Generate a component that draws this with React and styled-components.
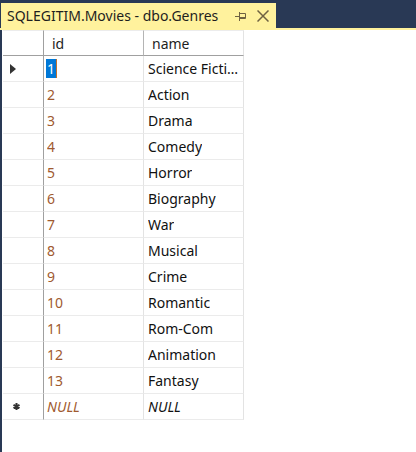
import React from 'react';
import styled, { createGlobalStyle } from 'styled-components';

const Global = createGlobalStyle`
  html, body { margin: 0; padding: 0; }
  body { background: #293955; font-family: "Noto Sans", "Open Sans", sans-serif; }
`;

const Window = styled.div`
  width: 416px;
  height: 452px;
  background: #293955;
  display: flex;
  flex-direction: column;
  overflow: hidden;
`;

const TabBar = styled.div`
  height: 25px;
  padding-top: 3px;
  padding-left: 1px;
  display: flex;
`;

const Tab = styled.div`
  width: 275px;
  background: #fff29d;
  display: flex;
  align-items: center;
  padding-left: 6px;
  padding-right: 7px;
  box-sizing: border-box;
`;

const Title = styled.span`
  flex: 1;
  font-size: 14px;
  color: #1e1e1e;
  white-space: nowrap;
`;

const TabIcons = styled.div`
  display: flex;
  align-items: center;
  gap: 10px;
`;

const Strip = styled.div`
  height: 2px;
  background: #fff29d;
`;

const Body = styled.div`
  flex: 1;
  margin-left: 2px;
  background: #fff;
  padding-left: 1px;
`;

const Row = styled.div`
  display: grid;
  grid-template-columns: 41px 100px 100px;
  height: 26px;
`;

const HeaderCell = styled.div`
  box-sizing: border-box;
  border-right: 1px solid ${p => (p.$last ? '#e3e3e3' : '#b4b4b4')};
  border-bottom: 1px solid #a0a0a0;
  border-top: 1px solid #ececec;
  display: flex;
  align-items: center;
  padding-left: 8px;
  font-size: 14px;
  color: #1e1e1e;
`;

const RowHead = styled.div`
  box-sizing: border-box;
  border-right: 1px solid #a0a0a0;
  border-bottom: 1px solid ${p => (p.$header ? '#a0a0a0' : '#ebebeb')};
  border-top: ${p => (p.$header ? '1px solid #ececec' : '0')};
  display: flex;
  align-items: center;
  padding-left: ${p => p.$pad || 0}px;
`;

const Cell = styled.div`
  box-sizing: border-box;
  border-right: 1px solid #e3e3e3;
  border-bottom: 1px solid #ebebeb;
  display: flex;
  align-items: center;
  padding-left: ${p => p.$pad}px;
  padding-right: 3px;
  font-size: 14px;
  color: ${p => (p.$num ? '#a05a30' : '#111')};
  font-style: ${p => (p.$null ? 'italic' : 'normal')};
  white-space: nowrap;
  overflow: hidden;
  min-width: 0;
`;

const CellText = styled.span`
  overflow: hidden;
  text-overflow: ellipsis;
  white-space: nowrap;
`;

const Selected = styled.span`
  background: #0078d7;
  color: #fff;
  line-height: 19px;
  padding: 0 1px;
  border-right: 1px solid #c0702e;
`;

const PinIcon = () => (
  <svg width="12" height="10" viewBox="0 0 12 10" fill="none" stroke="#6f6242" strokeWidth="1">
    <path d="M0 5.5 H4" />
    <path d="M4.5 1 V10" />
    <path d="M4.5 2.5 H10.5 V7.5 H4.5" />
    <path d="M4.5 6.5 H10.5" />
  </svg>
);

const CloseIcon = () => (
  <svg width="12" height="12" viewBox="0 0 12 12" fill="none" stroke="#6f6242" strokeWidth="1.5">
    <path d="M0.5 0.5 L11.5 11.5 M11.5 0.5 L0.5 11.5" />
  </svg>
);

const Arrow = () => (
  <svg width="7" height="10" viewBox="0 0 7 10">
    <path d="M0 0 L6 5 L0 10 Z" fill="#333" />
  </svg>
);

const Star = () => (
  <svg width="7" height="7" viewBox="0 0 7 7" stroke="#333" strokeWidth="2">
    <path d="M3.5 0 V7 M0.5 1.8 L6.5 5.2 M6.5 1.8 L0.5 5.2" />
  </svg>
);

const genres = [
  'Science Fiction', 'Action', 'Drama', 'Comedy', 'Horror', 'Biography', 'War',
  'Musical', 'Crime', 'Romantic', 'Rom-Com', 'Animation', 'Fantasy',
];

export default function App() {
  return (
    <Window>
      <Global />
      <TabBar>
        <Tab>
          <Title>SQLEGITIM.Movies - dbo.Genres</Title>
          <TabIcons>
            <PinIcon />
            <CloseIcon />
          </TabIcons>
        </Tab>
      </TabBar>
      <Strip />
      <Body>
        <Row>
          <RowHead $header />
          <HeaderCell>id</HeaderCell>
          <HeaderCell $last>name</HeaderCell>
        </Row>
        {genres.map((g, i) => (
          <Row key={g}>
            <RowHead $pad={7}>{i === 0 && <Arrow />}</RowHead>
            <Cell $num $pad={i === 0 ? 2 : 3}>
              {i === 0 ? <Selected>1</Selected> : <CellText>{i + 1}</CellText>}
            </Cell>
            <Cell $pad={4}>
              <CellText>{g}</CellText>
            </Cell>
          </Row>
        ))}
        <Row>
          <RowHead $pad={10}><Star /></RowHead>
          <Cell $num $null $pad={3}><CellText>NULL</CellText></Cell>
          <Cell $null $pad={4}><CellText>NULL</CellText></Cell>
        </Row>
      </Body>
    </Window>
  );
}
